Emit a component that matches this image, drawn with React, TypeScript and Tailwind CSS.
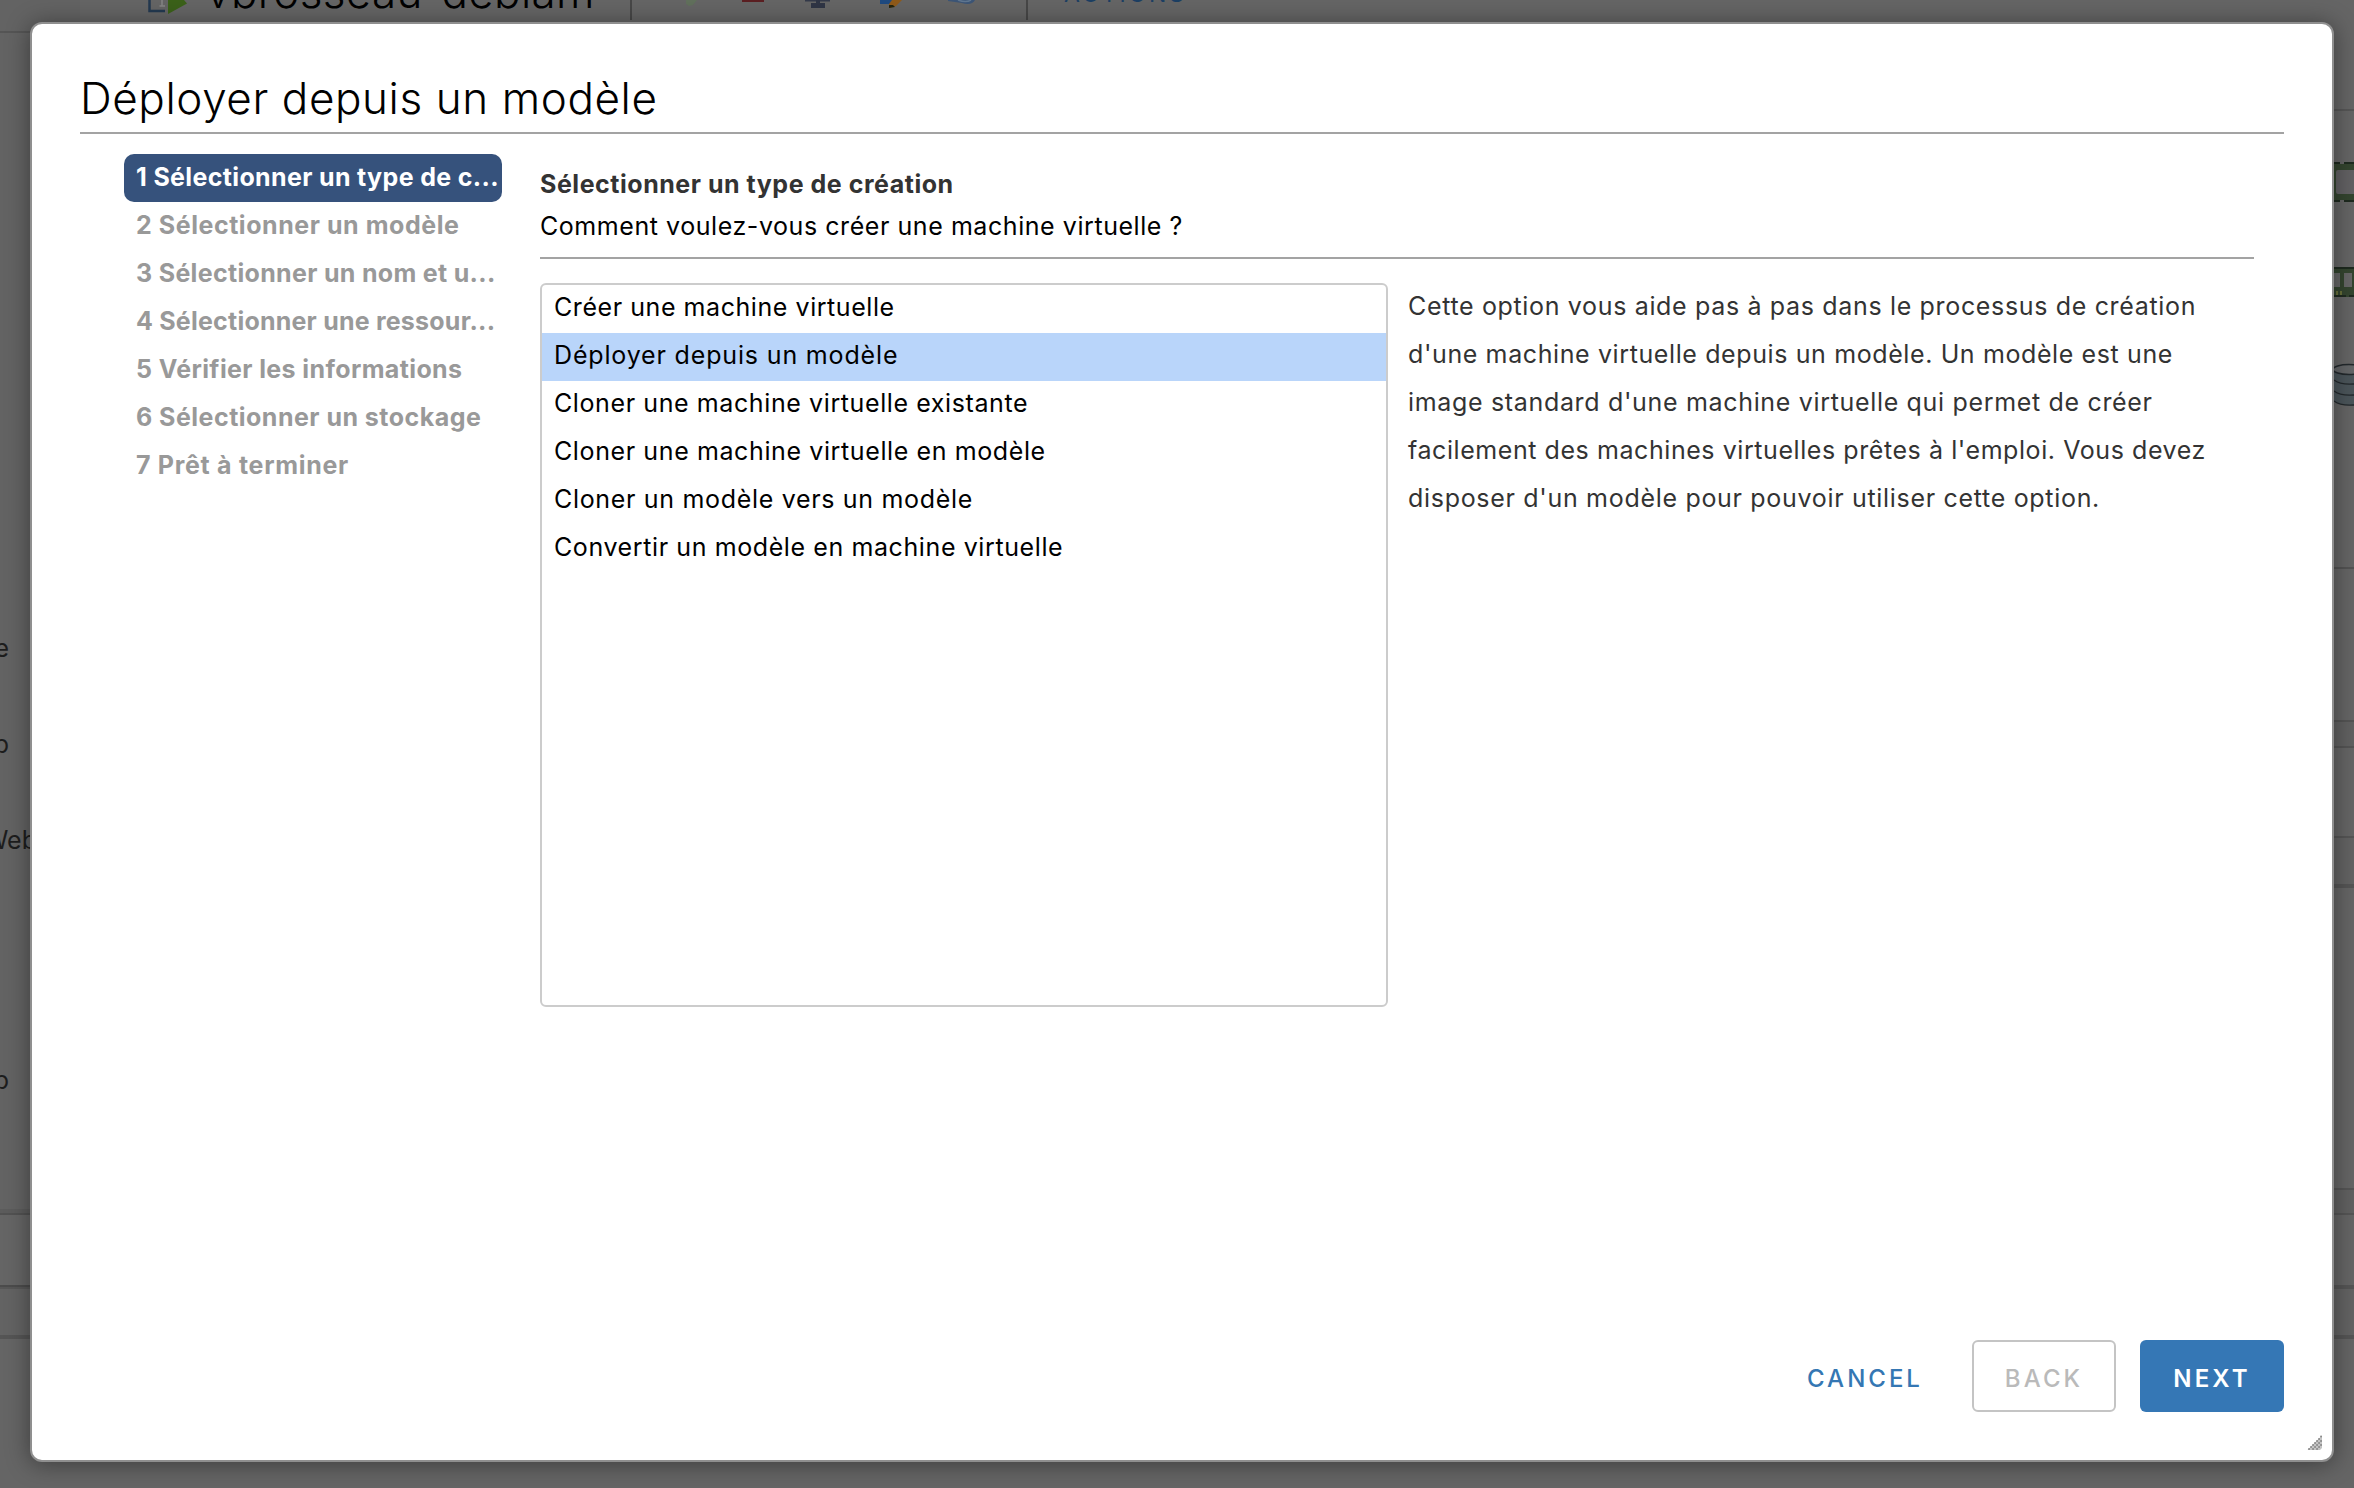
import React from "react";

const steps = [
  { label: "1 Sélectionner un type de c...", cls: "text-white tracking-[0.35px]" },
  { label: "2 Sélectionner un modèle", cls: "tracking-[0.55px]" },
  { label: "3 Sélectionner un nom et u...", cls: "tracking-[0.32px]" },
  { label: "4 Sélectionner une ressour...", cls: "tracking-[0.22px]" },
  { label: "5 Vérifier les informations", cls: "tracking-[0.38px]" },
  { label: "6 Sélectionner un stockage", cls: "tracking-[0.48px]" },
  { label: "7 Prêt à terminer", cls: "tracking-[0.7px]" },
];

const options = [
  { label: "Créer une machine virtuelle", cls: "tracking-[0.56px]" },
  { label: "Déployer depuis un modèle", cls: "tracking-[0.84px]" },
  { label: "Cloner une machine virtuelle existante", cls: "tracking-[0.6px]" },
  { label: "Cloner une machine virtuelle en modèle", cls: "tracking-[0.61px]" },
  { label: "Cloner un modèle vers un modèle", cls: "tracking-[0.68px]" },
  { label: "Convertir un modèle en machine virtuelle", cls: "tracking-[0.6px]" },
];

const description = [
  { text: "Cette option vous aide pas à pas dans le processus de création", cls: "tracking-[0.66px]" },
  { text: "d'une machine virtuelle depuis un modèle. Un modèle est une", cls: "tracking-[0.61px]" },
  { text: "image standard d'une machine virtuelle qui permet de créer", cls: "tracking-[0.67px]" },
  { text: "facilement des machines virtuelles prêtes à l'emploi. Vous devez", cls: "tracking-[0.57px]" },
  { text: "disposer d'un modèle pour pouvoir utiliser cette option.", cls: "tracking-[0.69px]" },
];

function Toolbar() {
  return (
    <div className="flex h-8 w-[1400px] items-start overflow-hidden">
      <svg className="ml-[66px] h-5 w-[44px] shrink-0" viewBox="146 0 44 20">
        <path d="M149.5 0V11H165" fill="none" stroke="#233950" strokeWidth="2.5" />
        <path d="M162 0V6M159.500 6H165" stroke="#858585" strokeWidth="1.5" fill="none" />
        <path d="M168 0V14L187 3.5L184 0Z" fill="#3b6119" />
      </svg>
      <span className="-mt-[35px] ml-4 w-[424px] shrink-0 text-[44px] font-light leading-[54px] tracking-[0.35px] text-black">
        vbrosseau-debiam
      </span>
      <svg className="h-5 w-[398px] shrink-0" viewBox="630 0 398 20">
        <rect x="630" y="0" width="2" height="20" fill="#474747" />
        <path d="M686 0V4L689 6L693 5L697 0Z" fill="#61705c" />
        <rect x="742" y="0" width="22" height="2" fill="#5b1f22" />
        <rect x="805" y="0" width="25" height="1.5" fill="#343a4a" />
        <path d="M816 0H820V3H825V8H811V3H816Z" fill="#2f3545" />
        <path d="M880 0H892V4H880Z" fill="#1f4a80" />
        <path d="M892 0H902L896 6L889 8V4Z" fill="#8f5a1a" />
        <path d="M889 5L893 5L895 7L889 8Z" fill="#26240c" />
        <path d="M948 0H975C973 4 968 5 962 3L948 1Z" fill="#3c5576" />
        <path d="M958 0Q966 3 971 0" fill="none" stroke="#5f7690" strokeWidth="1.5" />
        <rect x="1026" y="0" width="2" height="20" fill="#474747" />
      </svg>
      <span className="-mt-[21px] ml-[36px] text-[23px] leading-[30px] tracking-[2.9px] text-[#1c3f63]">ACTIONS</span>
    </div>
  );
}

function Hardware() {
  return (
    <svg className="h-[330px] w-5 shrink-0" viewBox="2334 111 20 330">
      <path d="M2334 162H2340V164H2344V162H2354V202H2344V200H2340V202H2334Z" fill="#34452f" />
      <path d="M2334 163H2340M2344 163H2354M2334 201H2340M2344 201H2354" stroke="#1e2a1f" strokeWidth="2" />
      <path d="M2354 170H2338Q2336 170 2336 172V192Q2336 194 2338 194H2354Z" fill="#626163" />
      <rect x="2334" y="267" width="20" height="30" fill="#34452f" />
      <path d="M2334 268H2354M2334 296H2346M2349 296H2354" stroke="#1e2a1f" strokeWidth="2" />
      <path d="M2334 273H2340V287H2334ZM2344 273H2352V287H2344Z" fill="#666" />
      <path d="M2337 291V295M2341 291V295" stroke="#68703a" strokeWidth="2" />
      <path d="M2334 370V401Q2338 406 2354 405V370Z" fill="#4b555a" />
      <ellipse cx="2349" cy="369.5" rx="16" ry="5" fill="#646668" stroke="#23292c" strokeWidth="1.5" />
      <path d="M2334 380Q2340 385 2354 384M2334 391Q2340 396 2354 395M2334 401Q2340 406 2354 405" fill="none" stroke="#23292c" strokeWidth="1.3" />
    </svg>
  );
}

function Backdrop() {
  return (
    <div className="flex h-full w-full justify-between overflow-hidden bg-[#656565]">
      <div className="flex h-full w-20 shrink-0 flex-col overflow-hidden bg-[#636363] text-[25px] text-[#1d1d1d]">
        <div className="h-[33px] shrink-0 border-b-2 border-[#555]" />
        <div className="mt-[599px] flex h-8 w-[9px] shrink-0 justify-end leading-8"><span>e</span></div>
        <div className="mt-16 flex h-8 w-[9px] shrink-0 justify-end leading-8"><span>b</span></div>
        <div className="mt-16 flex h-8 w-[37px] shrink-0 justify-end leading-8"><span>Web</span></div>
        <div className="mt-[208px] flex h-8 w-[9px] shrink-0 justify-end leading-8"><span>b</span></div>
        <div className="mt-[113px] h-1 shrink-0 bg-[#5c5c5c]" />
        <div className="h-0.5 shrink-0 bg-[#525252]" />
        <div className="h-[70px] shrink-0 bg-[#656565]" />
        <div className="h-1 shrink-0 border-t-2 border-[#4c4c4c] bg-[#575757]" />
        <div className="h-[46px] shrink-0" />
        <div className="h-1 shrink-0 bg-[#555]" />
        <div className="grow bg-[#656565]" />
      </div>
      <div className="grow">
        <Toolbar />
      </div>
      <div className="flex h-full w-5 shrink-0 flex-col">
        <div className="h-[111px] shrink-0 border-b-2 border-[#565656]" />
        <Hardware />
        <div className="h-[128px] shrink-0 border-b-2 border-[#535353]" />
        <div className="h-[153px] shrink-0 border-b-2 border-[#545454]" />
        <div className="h-[26px] shrink-0 border-b-2 border-[#545454] bg-[#616161]" />
        <div className="h-[90px] shrink-0 border-b-2 border-[#555]" />
        <div className="h-[50px] shrink-0 border-b-4 border-[#555] bg-[#636363]" />
        <div className="h-[302px] shrink-0 border-b-2 border-[#555]" />
        <div className="h-[25px] shrink-0 border-b-2 border-[#555] bg-[#616161]" />
        <div className="h-[74px] shrink-0 border-b-4 border-[#555]" />
        <div className="h-[50px] shrink-0 border-b-4 border-[#555] bg-[#636363]" />
      </div>
    </div>
  );
}

function Grip() {
  return (
    <svg className="absolute bottom-[9px] right-[9px] h-4 w-4" viewBox="0 0 16 16">
      <path d="M15 0.5V13L13 15H0.5Z" fill="#c4c4c4" />
      <path
        d="M14 1.5H14.1M12 4H12.1M14 6H14.1M10 6H10.1M12 8H12.1M8 8H8.1M10 10H10.1M14 10H14.1M6 10H6.1M12 12H12.1M8 12H8.1M4 12H4.1M6 14H6.1M10 14H10.1M2 14H2.1"
        stroke="#858585"
        strokeWidth="1.8"
        strokeLinecap="round"
      />
    </svg>
  );
}

export default function App() {
  return (
    <div className="relative h-[1488px] w-[2354px] overflow-hidden font-['Inter',sans-serif]">
      <Backdrop />
      <div className="absolute left-[30px] top-[22px] flex h-[1440px] w-[2304px] flex-col rounded-xl border-2 border-[#8f8f8f] bg-white px-12 pb-12 shadow-[0_2px_24px_rgba(0,0,0,0.42)]">
        <h1 className="h-[110px] shrink-0 border-b-2 border-[#a3a3a3] pt-[47px] text-[44px] font-light leading-[54px] tracking-[0.6px] text-black">
          Déployer depuis un modèle
        </h1>
        <div className="flex grow pt-5">
          <ol className="ml-11 w-[378px] shrink-0 text-[25px] font-bold text-[#999]">
            {steps.map((s, i) => (
              <li
                key={s.label}
                className={`h-12 whitespace-nowrap rounded-[10px] pl-3 leading-[46px] ${i === 0 ? "bg-[#36527c]" : ""} ${s.cls}`}
              >
                {s.label}
              </li>
            ))}
          </ol>
          <section className="ml-[38px] w-[1714px] shrink-0">
            <div className="h-[105px] border-b-2 border-[#a3a3a3] pt-[9px] text-[25px] leading-[42px]">
              <h2 className="font-bold tracking-[0.53px] text-[#333]">Sélectionner un type de création</h2>
              <p className="tracking-[0.56px] text-black">Comment voulez-vous créer une machine virtuelle ?</p>
            </div>
            <div className="mt-6 flex">
              <ul className="h-[724px] w-[848px] rounded-md border-2 border-[#ccc] text-[25px] text-black">
                {options.map((o, i) => (
                  <li
                    key={o.label}
                    className={`h-12 whitespace-nowrap pl-3 leading-[45px] ${i === 1 ? "bg-[#b9d5fa]" : ""} ${o.cls}`}
                  >
                    {o.label}
                  </li>
                ))}
              </ul>
              <div className="-mt-px ml-5 text-[25px] leading-[48px] text-[#333]">
                {description.map((d) => (
                  <p key={d.text} className={`whitespace-nowrap ${d.cls}`}>
                    {d.text}
                  </p>
                ))}
              </div>
            </div>
          </section>
        </div>
        <footer className="flex h-[72px] shrink-0 items-stretch justify-end gap-6 text-2xl leading-[74px]">
          <button className="mr-[11px] flex w-[144px] justify-center pt-0.5 font-medium tracking-[3px] text-[#3577b3]">CANCEL</button>
          <button className="flex w-[144px] justify-center rounded-md border-2 border-[#c4c4c4] pt-0.5 font-medium leading-[70px] tracking-[3.1px] text-[#bababa]">
            BACK
          </button>
          <button className="flex w-[144px] justify-center rounded-md bg-[#3577b5] pt-0.5 font-semibold tracking-[3.1px] text-white">NEXT</button>
        </footer>
        <Grip />
      </div>
    </div>
  );
}
